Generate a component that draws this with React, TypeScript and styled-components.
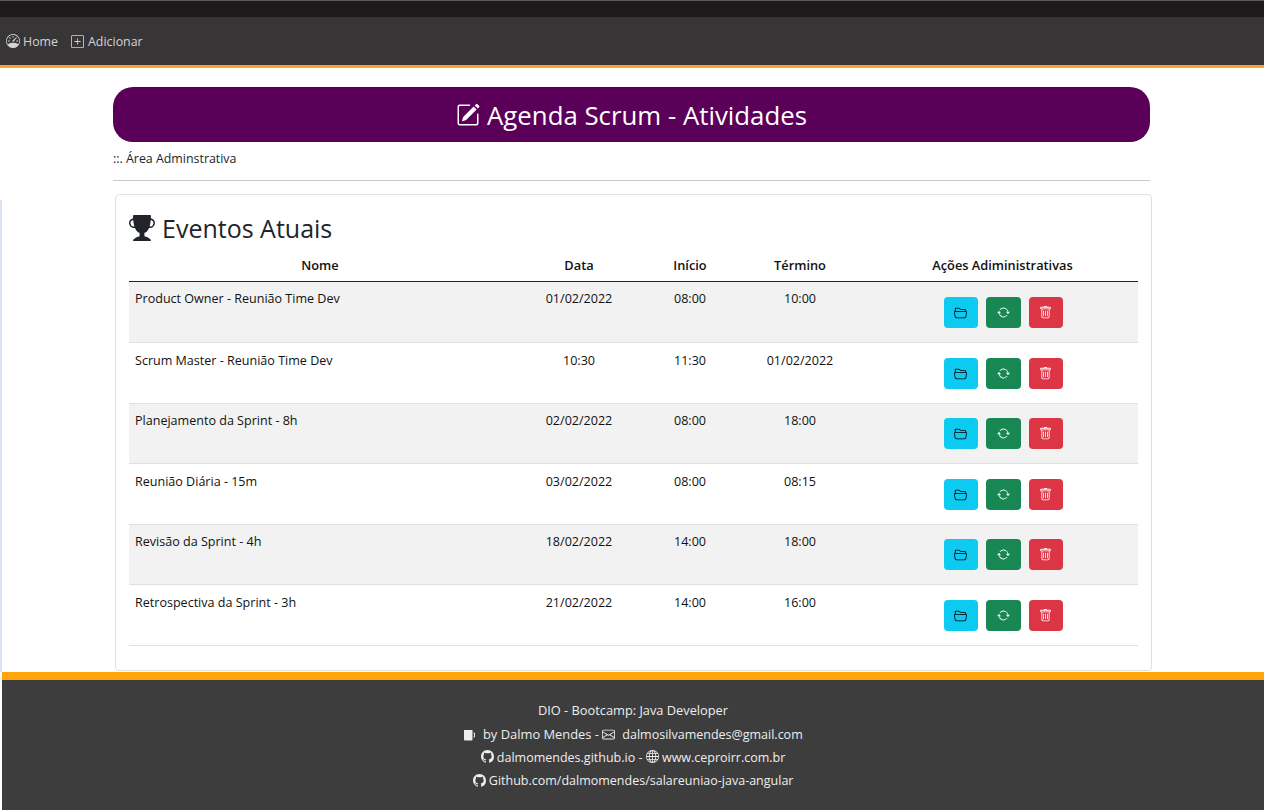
import { createGlobalStyle } from "styled-components";
import styled from "styled-components";
import {
  BsArrowRepeat,
  BsEnvelope,
  BsFolder2Open,
  BsGithub,
  BsGlobe,
  BsPencilSquare,
  BsPlusSquare,
  BsSpeedometer,
  BsTrash,
  BsTrophyFill,
} from "react-icons/bs";

interface Evento {
  nome: string;
  data: string;
  inicio: string;
  termino: string;
}

const eventos: Evento[] = [
  { nome: "Product Owner - Reunião Time Dev", data: "01/02/2022", inicio: "08:00", termino: "10:00" },
  { nome: "Scrum Master - Reunião Time Dev", data: "10:30", inicio: "11:30", termino: "01/02/2022" },
  { nome: "Planejamento da Sprint - 8h", data: "02/02/2022", inicio: "08:00", termino: "18:00" },
  { nome: "Reunião Diária - 15m", data: "03/02/2022", inicio: "08:00", termino: "08:15" },
  { nome: "Revisão da Sprint - 4h", data: "18/02/2022", inicio: "14:00", termino: "18:00" },
  { nome: "Retrospectiva da Sprint - 3h", data: "21/02/2022", inicio: "14:00", termino: "16:00" },
];

function CupIcon() {
  return (
    <svg width="13" height="11" viewBox="0 0 13 11" fill="currentColor">
      <path d="M1 0h8.5v9.5a1 1 0 0 1-1 1H2a1 1 0 0 1-1-1z" />
      <path d="M10.5 2.5h.5a1 1 0 0 1 1 1v3a1 1 0 0 1-1 1h-.5v-1h.5v-3h-.5z" />
    </svg>
  );
}

export default function App() {
  return (
    <>
      <GlobalStyle />
      <TopStrip />
      <NavBar>
        <NavLink $gap={3}>
          <BsSpeedometer size={14} /> Home
        </NavLink>
        <NavLink $gap={4}>
          <BsPlusSquare size={13} /> Adicionar
        </NavLink>
      </NavBar>

      <Main>
        <Banner>
          <BsPencilSquare size={24} /> Agenda Scrum - Atividades
        </Banner>
        <Subtitle>::. Área Adminstrativa</Subtitle>
        <Divider />

        <Card>
          <CardTitle>
            <BsTrophyFill size={26} /> Eventos Atuais
          </CardTitle>
          <Table>
            <colgroup>
              <col style={{ width: 382 }} />
              <col style={{ width: 136 }} />
              <col style={{ width: 86 }} />
              <col style={{ width: 134 }} />
              <col style={{ width: 271 }} />
            </colgroup>
            <thead>
              <tr>
                <HeadCell>Nome</HeadCell>
                <HeadCell>Data</HeadCell>
                <HeadCell>Início</HeadCell>
                <HeadCell>Término</HeadCell>
                <HeadCell>Ações Adiministrativas</HeadCell>
              </tr>
            </thead>
            <tbody>
              {eventos.map((evento) => (
                <Row key={evento.nome}>
                  <NameCell>{evento.nome}</NameCell>
                  <Cell>{evento.data}</Cell>
                  <Cell>{evento.inicio}</Cell>
                  <Cell>{evento.termino}</Cell>
                  <ActionCell>
                    <Actions>
                      <ActionButton $bg="#0dcaf0" $fg="#000">
                        <BsFolder2Open size={13} />
                      </ActionButton>
                      <ActionButton $bg="#198754" $fg="#fff">
                        <BsArrowRepeat size={13} />
                      </ActionButton>
                      <ActionButton $bg="#dc3545" $fg="#fff">
                        <BsTrash size={13} />
                      </ActionButton>
                    </Actions>
                  </ActionCell>
                </Row>
              ))}
            </tbody>
          </Table>
        </Card>
      </Main>

      <Footer>
        <FooterLine $size={12.8}>DIO - Bootcamp: Java Developer</FooterLine>
        <ContactLine $size={12.9}>
          <CupIcon />
          &nbsp;&nbsp;by Dalmo Mendes - <BsEnvelope size={13} />
          <Email>dalmosilvamendes@gmail.com</Email>
        </ContactLine>
        <FooterLine $size={12.5}>
          <BsGithub size={13} /> dalmomendes.github.io - <BsGlobe size={13} /> www.ceproirr.com.br
        </FooterLine>
        <FooterLine $size={12.5}>
          <BsGithub size={13} /> Github.com/dalmomendes/salareuniao-java-angular
        </FooterLine>
      </Footer>
    </>
  );
}

const GlobalStyle = createGlobalStyle`
  html, body {
    margin: 0;
    background: #fff;
    color: #212529;
    font-family: "Open Sans", "Noto Sans", sans-serif;
    font-size: 12.5px;
  }
  svg {
    vertical-align: -0.125em;
  }
`;

const TopStrip = styled.div`
  height: 16px;
  background: #1c1a1b;
  border-top: 1px solid #5a5a5a;
`;

const NavBar = styled.nav`
  height: 48px;
  display: flex;
  align-items: center;
  gap: 13px;
  padding-left: 6px;
  background: #373536;
  border-bottom: 3px solid #f5a623;
`;

const NavLink = styled.a<{ $gap: number }>`
  color: #d4d4d4;
  font-size: 12.4px;
  display: flex;
  align-items: center;
  gap: ${(p) => p.$gap}px;
`;

const Main = styled.main`
  position: relative;
  height: 604px;
  padding: 19px 113px 0 113px;
  box-sizing: border-box;
  background: #fff;

  &::before {
    content: "";
    position: absolute;
    left: 0;
    top: 132px;
    bottom: 0;
    width: 2px;
    background: #d9e3f5;
  }
`;

const Banner = styled.h1`
  margin: 0;
  width: 1037px;
  height: 55px;
  padding-top: 1px;
  box-sizing: border-box;
  display: flex;
  align-items: center;
  justify-content: center;
  gap: 7px;
  border-radius: 20px;
  background: #5a0059;
  color: #fff;
  font-size: 25.8px;
  font-weight: 500;
`;

const Subtitle = styled.div`
  margin-top: 8px;
  height: 17px;
  line-height: 17px;
  font-size: 12.4px;
  color: #212529;
`;

const Divider = styled.hr`
  width: 1037px;
  margin: 13px 0 13px;
  border: 0;
  border-top: 1px solid #c8c8c8;
`;

const Card = styled.section`
  width: 1037px;
  height: 477px;
  margin-left: 2px;
  padding: 0 13px 0 13px;
  box-sizing: border-box;
  border: 1px solid #dfdfdf;
  border-radius: 4px;
`;

const CardTitle = styled.h2`
  margin: 0;
  height: 59px;
  padding-top: 7px;
  box-sizing: border-box;
  display: flex;
  align-items: center;
  gap: 7px;
  font-size: 25px;
  font-weight: 500;
  color: #212529;
`;

const Table = styled.table`
  width: 1009px;
  border-collapse: collapse;
  table-layout: fixed;
  font-size: 12.55px;
  color: #111;
`;

const HeadCell = styled.th`
  height: 27px;
  padding: 0 6px 4px;
  box-sizing: border-box;
  text-align: center;
  font-size: 12.8px;
  font-weight: 600;
  color: #111;
  border-bottom: 1px solid #212529;
`;

const Row = styled.tr`
  height: 60.5px;
  border-bottom: 1px solid #dfdfdf;

  &:first-child {
    height: 61.5px;
  }

  &:nth-child(odd) {
    background: #f2f2f2;
  }
`;

const Cell = styled.td`
  padding: 8.6px 6px 0;
  vertical-align: top;
  text-align: center;
`;

const NameCell = styled(Cell)`
  text-align: left;
`;

const ActionCell = styled.td`
  padding: 1px 0 0 1.5px;
  vertical-align: middle;
`;

const Actions = styled.div`
  display: flex;
  justify-content: center;
  gap: 8px;
`;

const ActionButton = styled.button<{ $bg: string; $fg: string }>`
  width: 34.5px;
  height: 31px;
  padding: 0;
  border: 0;
  border-radius: 4px;
  background: ${(p) => p.$bg};
  color: ${(p) => p.$fg};
  display: flex;
  align-items: center;
  justify-content: center;
`;

const Footer = styled.footer`
  margin-left: 2px;
  height: 128px;
  padding-top: 19px;
  box-sizing: content-box;
  background: #3d3d3d;
  border-top: 8px solid #ffa509;
  color: #eee;
  text-align: center;
`;

const FooterLine = styled.div<{ $size: number }>`
  height: 23.4px;
  line-height: 23.4px;
  font-size: ${(p) => p.$size}px;
`;

const ContactLine = styled(FooterLine)`
  padding-top: 1px;
  margin-bottom: -1px;
`;

const Email = styled.span`
  margin-left: 7px;
  font-size: 12.5px;
`;
